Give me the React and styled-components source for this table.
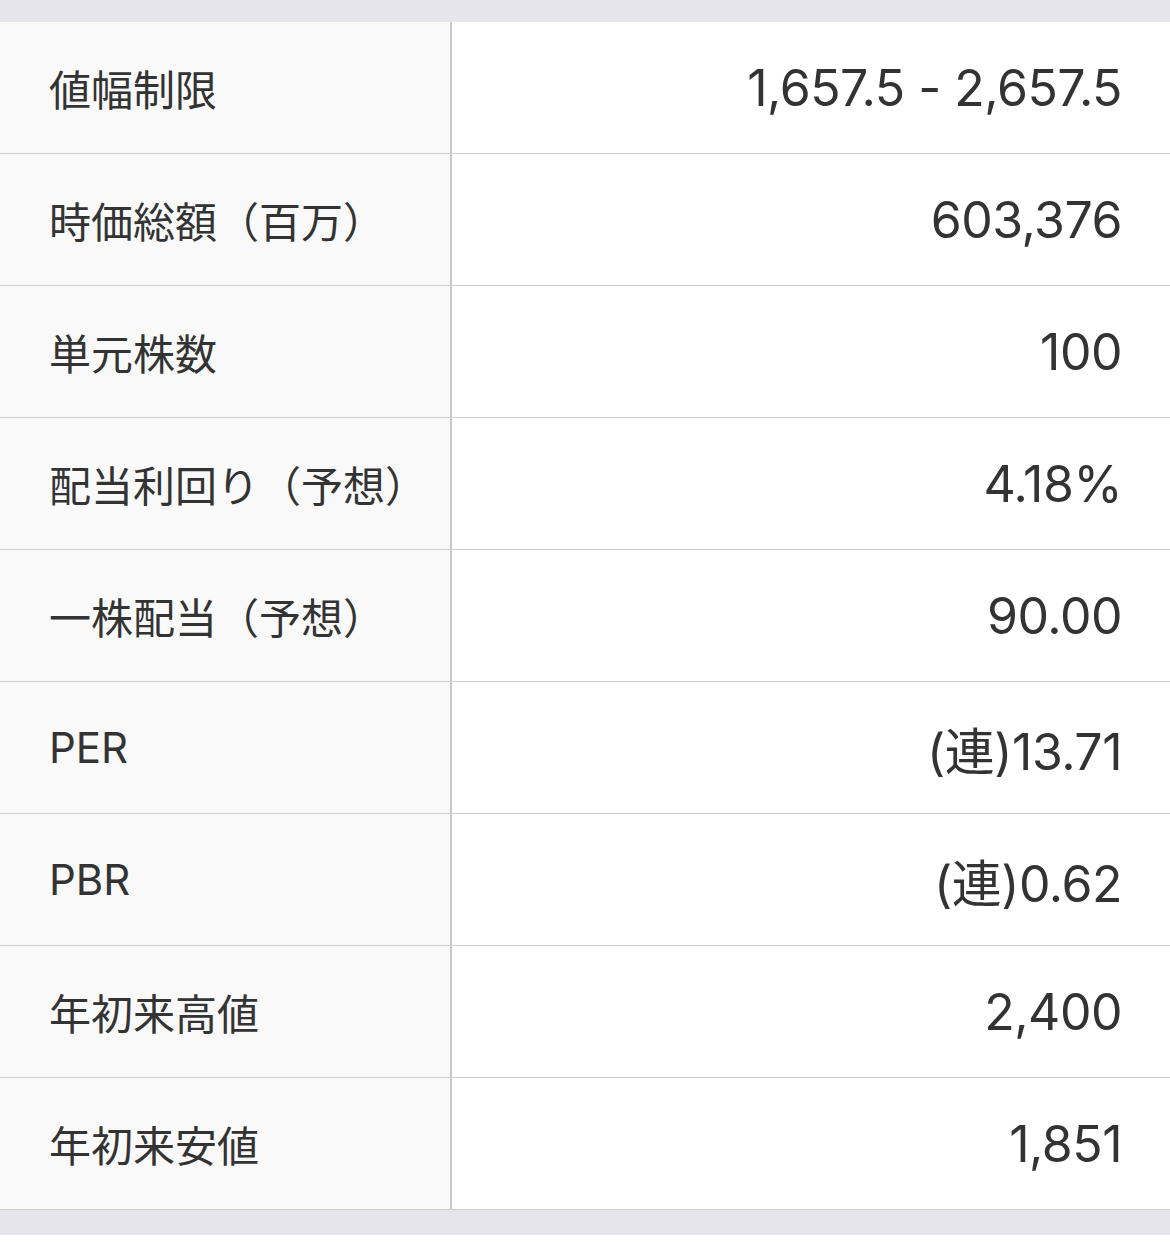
import React from "react";
import styled, { createGlobalStyle } from "styled-components";

const GlobalStyle = createGlobalStyle`
  html, body {
    margin: 0;
    padding: 0;
    background: #ffffff;
  }
  body {
    font-family: Inter, "Noto Sans CJK JP", sans-serif;
    color: #333333;
  }
`;

const Page = styled.div`
  width: 1170px;
  padding: 22px 0 25px;
  background: #e6e5eb;
`;

const Table = styled.div`
  display: flex;
  flex-direction: column;
  background: #ffffff;
`;

const Row = styled.div`
  display: grid;
  grid-template-columns: 452px 1fr;
  height: 131px;
  border-bottom: 1px solid #cfced3;
`;

const Label = styled.div`
  display: flex;
  align-items: center;
  padding-left: 49px;
  background: #f9f9f9;
  border-right: 2px solid #c9c9c9;
  font-size: 42px;
`;

const Value = styled.div`
  display: flex;
  align-items: center;
  justify-content: flex-end;
  padding-right: 48px;
  font-size: 50px;
  font-weight: 400;
  letter-spacing: -0.5px;
`;

const rows = [
  ["値幅制限", "1,657.5 - 2,657.5"],
  ["時価総額（百万）", "603,376"],
  ["単元株数", "100"],
  ["配当利回り（予想）", "4.18%"],
  ["一株配当（予想）", "90.00"],
  ["PER", "(連)13.71"],
  ["PBR", "(連)0.62"],
  ["年初来高値", "2,400"],
  ["年初来安値", "1,851"],
];

export default function App() {
  return (
    <>
      <GlobalStyle />
      <Page>
        <Table>
          {rows.map(([label, value]) => (
            <Row key={label}>
              <Label>{label}</Label>
              <Value>{value}</Value>
            </Row>
          ))}
        </Table>
      </Page>
    </>
  );
}
